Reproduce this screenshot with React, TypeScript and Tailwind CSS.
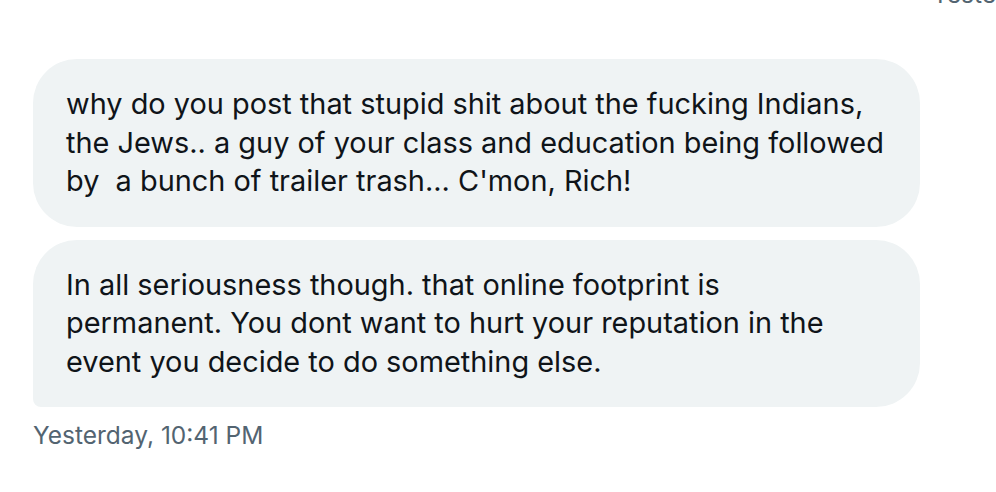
import React from 'react';

const bubbles = [
    {
        lines: [
            'why do you post that stupid shit about the fucking Indians,',
            'the Jews.. a guy of your class and education being followed',
            'by\u00a0 a bunch of trailer trash... C\'mon, Rich!',
        ],
        last: false,
    },
    {
        lines: [
            'In all seriousness though. that online footprint is',
            'permanent. You dont want to hurt your reputation in the',
            'event you decide to do something else.',
        ],
        last: true,
    },
];

const Bubble = ({ lines, last }: { lines: string[]; last: boolean }) => (
    <div
        className={`w-[887px] bg-[#eff3f4] px-[33px] pt-[26px] pb-[26px] text-[28.9px] leading-[38.5px] text-[#0f1419] rounded-[44px] ${last ? 'rounded-bl-[8px]' : ''}`}
    >
        {lines.map((line) => (
            <div key={line} className="whitespace-nowrap">
                {line}
            </div>
        ))}
    </div>
);

export default function App() {
    return (
        <div className="h-[492px] w-[996px] overflow-hidden bg-white font-['Inter',sans-serif]">
            <div className="h-[10px] overflow-hidden whitespace-nowrap pl-[932px] text-[24.5px] leading-[28px] text-[#536471]">
                <div className="-mt-[20px]">Yesterday, 10:38 PM</div>
            </div>
            <div className="flex flex-col gap-[13px] pl-[33px] pt-[49px]">
                {bubbles.map((b) => (
                    <Bubble key={b.lines[0]} lines={b.lines} last={b.last} />
                ))}
            </div>
            <div className="pl-[33px] pt-[12px] text-[24.5px] leading-[32px] text-[#536471]">
                Yesterday, 10:41 PM
            </div>
        </div>
    );
}
